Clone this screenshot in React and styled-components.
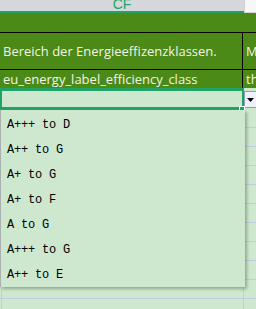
import React from "react";
import styled, { createGlobalStyle } from "styled-components";

const GlobalStyle = createGlobalStyle`
  html, body { margin: 0; padding: 0; background: #cde8cf; }
  body { width: 256px; height: 309px; overflow: hidden; }
`;

const Page = styled.div`
  position: relative;
  width: 256px;
  height: 309px;
  overflow: hidden;
  background: #cde8cf;
  font-family: "Open Sans", Lato, sans-serif;
`;

const HeaderBar = styled.div`
  display: flex;
  height: 13px;
`;

const ColHeader = styled.div`
  width: 244px;
  height: 11px;
  background: #d5d7dd;
  border-bottom: 2px solid #21a366;
  color: #21a366;
  font-family: "Liberation Sans", Arial, sans-serif;
  font-size: 14px;
  line-height: 9px;
  text-align: center;
  overflow: hidden;
`;

const ColHeaderRest = styled.div`
  flex: 1;
  background: #f7f7f7;
  border-left: 1px solid #d0d0d0;
  border-bottom: 1px solid #d8d8d8;
`;

const GreenBand = styled.div`
  height: 19px;
  background: #4b8a16;
`;

const DataRow = styled.div`
  display: grid;
  grid-template-columns: 243px 1fr;
  height: ${(p) => p.$h}px;
  background: #4b8a16;
  border-top: 1px solid #000;
`;

const DataCell = styled.div`
  display: flex;
  align-items: flex-end;
  padding: 0 0 ${(p) => p.$pb}px 3px;
  color: #f3f3e6;
  font-size: 13px;
  line-height: 16px;
  white-space: nowrap;
  overflow: hidden;
  border-right: ${(p) => (p.$divider ? "1px solid #000" : "none")};
`;

const SelectedRow = styled.div`
  display: flex;
  height: 22px;
`;

const SelectedCell = styled.div`
  position: relative;
  box-sizing: border-box;
  width: 244px;
  height: 22px;
  border: 2px solid #21a366;
  border-top-width: 3px;
  border-bottom-width: 3px;
  background: #cde8cf;
`;

const FillHandle = styled.div`
  position: absolute;
  right: -3px;
  bottom: -5px;
  width: 4px;
  height: 4px;
  background: #21a366;
  border: 1px solid #ffffff;
`;

const DropButton = styled.div`
  box-sizing: border-box;
  margin-top: 3px;
  width: 12px;
  height: 17px;
  background: #eef1f7;
  border: 1px solid #8d9dbd;
  border-right: none;
  display: flex;
  align-items: center;
  justify-content: center;
`;

const GridBody = styled.div`
  display: flex;
  flex-direction: column;
`;

const GridRow = styled.div`
  display: grid;
  grid-template-columns: 244px 1fr;
  height: ${(p) => p.$h}px;
  border-bottom: 1px solid #c5c9df;
`;

const GridCell = styled.div`
  border-right: ${(p) => (p.$divider ? "1px solid #c5c9df" : "none")};
  border-left: ${(p) => (p.$first ? "1px solid #c5c9df" : "none")};
  margin-left: ${(p) => (p.$first ? "1px" : "0")};
`;

const ListPopup = styled.div`
  position: absolute;
  top: 110px;
  left: 0;
  box-sizing: border-box;
  width: 245px;
  height: 177px;
  padding-top: 3px;
  background: #cee8d0;
  border-left: 1px solid #a9b0b0;
  box-shadow: 2px 2px 3px rgba(0, 0, 0, 0.28);
`;

const ListItem = styled.div`
  height: 25px;
  line-height: 25px;
  padding-left: 6px;
  font-family: "Liberation Mono", "Courier New", monospace;
  font-size: 12px;
  letter-spacing: -0.2px;
  color: #000;
  white-space: pre;
`;

const options = [
  "A+++ to D",
  "A++ to G",
  "A+ to G",
  "A+ to F",
  "A to G",
  "A+++ to G",
  "A++ to E",
];

export default function App() {
  const gridRows = [17, 18, 18, 18, 18, 18, 18, 18, 18, 18, 18];
  return (
    <>
      <GlobalStyle />
      <Page>
        <HeaderBar>
          <ColHeader>CF</ColHeader>
          <ColHeaderRest />
        </HeaderBar>
        <GreenBand />
        <DataRow $h={36}>
          <DataCell $divider $pb={10}>Bereich der Energieeffizenzklassen.</DataCell>
          <DataCell $pb={10}>Mindestens</DataCell>
        </DataRow>
        <DataRow $h={18}>
          <DataCell $divider $pb={1}>eu_energy_label_efficiency_class</DataCell>
          <DataCell $pb={1}>the</DataCell>
        </DataRow>
        <SelectedRow>
          <SelectedCell>
            <FillHandle />
          </SelectedCell>
          <DropButton>
            <svg width="7" height="4" viewBox="0 0 7 4">
              <path d="M0 0 H7 L3.5 4 Z" fill="#000" />
            </svg>
          </DropButton>
        </SelectedRow>
        <GridBody>
          {gridRows.map((h, i) => (
            <GridRow key={i} $h={h}>
              <GridCell $first $divider />
              <GridCell />
            </GridRow>
          ))}
        </GridBody>
        <ListPopup>
          {options.map((o, i) => (
            <ListItem key={i}>{o}</ListItem>
          ))}
        </ListPopup>
      </Page>
    </>
  );
}
